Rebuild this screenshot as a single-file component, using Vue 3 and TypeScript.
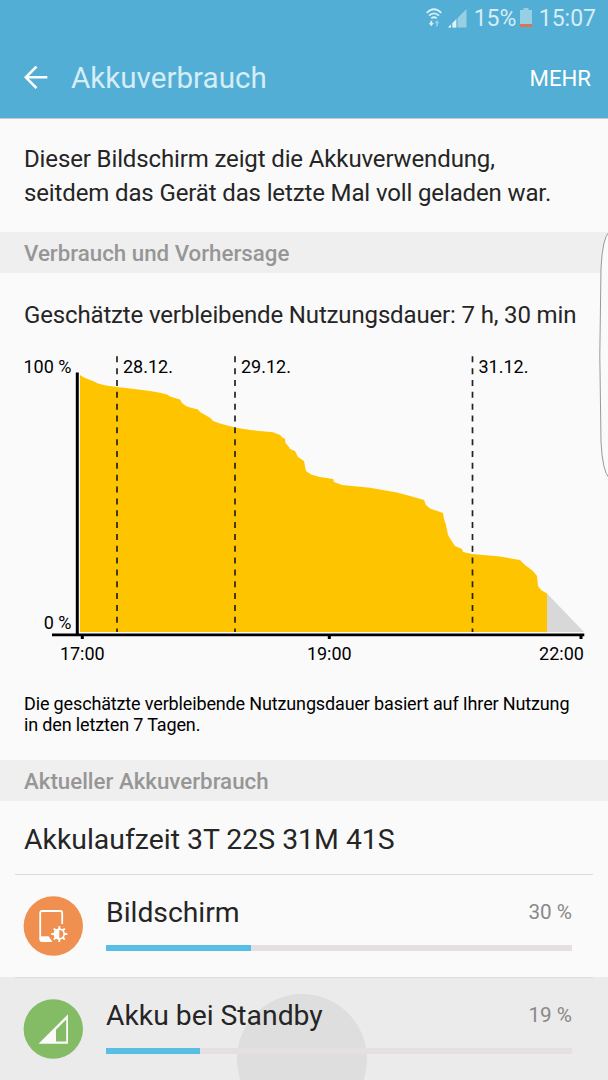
<script setup lang="ts">
interface Consumer {
  name: string
  percent: number
  fill: number
  icon: 'display' | 'standby'
  pressed: boolean
}

const consumers: Consumer[] = [
  { name: 'Bildschirm', percent: 30, fill: 31.1, icon: 'display', pressed: false },
  { name: 'Akku bei Standby', percent: 19, fill: 20.1, icon: 'standby', pressed: true },
]

const days = [
  { x: 117, label: '28.12.' },
  { x: 235, label: '29.12.' },
  { x: 472.5, label: '31.12.' },
]

const hours = [
  { tick: 82.3, x: 82.3, label: '17:00' },
  { tick: 329.3, x: 329.3, label: '19:00' },
  { tick: 581, x: 561.5, label: '22:00' },
]

const level: [number, number][] = [
  [80, 375], [85, 378], [93, 381], [98, 383.5], [106, 385.5], [117, 387], [130, 388.5],
  [150, 391], [160, 392.7], [167, 394.5], [170, 396.5], [180, 399.5], [182, 403], [186, 406],
  [190, 407.5], [198, 409.5], [200, 412], [207, 416], [211, 418.5], [213, 421], [220, 423.5],
  [235, 427.5], [250, 430], [273, 432.2], [280, 435], [283, 438], [285, 438.5], [285.5, 443],
  [289, 447], [290, 449], [295, 451], [298, 457], [304, 461], [306, 471], [311, 474.5],
  [320, 477], [333, 479], [334, 482], [342, 485], [370, 487.7], [397, 492.5], [410, 496],
  [424, 500], [426, 505], [430, 508.5], [443, 513], [444, 519], [446, 525], [448, 535],
  [451, 540], [455, 546], [462, 549], [463, 552], [472, 554], [500, 556.5], [520, 560],
  [525, 565], [533, 571], [537, 576], [538, 586], [541, 590], [547, 593.5],
]
const area = `80,632 ${level.map((p) => p.join(',')).join(' ')} 547,632`
</script>

<template>
  <div class="screen">
    <header class="top">
      <div class="status">
        <svg class="wifi" width="16" height="19" viewBox="0 0 16 19" fill="none" stroke="#d9eff7" stroke-width="1.800">
          <path d="M.7 4.800Q8-2.200 15.300 4.800M3 7.700Q8 3 13 7.700M5.300 10.400Q8 8 10.700 10.400" />
          <path d="M5.300 12.800V16" />
          <path d="M2.800 15h5L5.300 18.300z" fill="#d9eff7" stroke="none" />
          <g opacity=".5">
            <path d="M11 14.500V18.300" />
            <path d="M8.500 15.200h5L11 12z" fill="#d9eff7" stroke="none" />
          </g>
        </svg>
        <svg class="signal" width="19" height="19" viewBox="0 0 19 19">
          <path d="M0 18.500 18.500 0v18.500z" fill="#97cfe5" />
          <path d="M0 18.500 3.300 15.200v3.300zM4.500 18.500v-4.500L8.500 10v8.500z" fill="#e0f2f8" />
          <path d="M3.600 14v5M9 8.500v10.500" stroke="#52aed5" stroke-width="1" />
        </svg>
        <span class="charge">15%</span>
        <svg class="battery" width="12" height="19" viewBox="0 0 12 19">
          <path d="M0 2h3.500V0h5v2H12v17H0z" fill="#97cfe5" />
          <path d="M0 16h12v3H0z" fill="#d97552" />
        </svg>
        <span class="clock">15:07</span>
      </div>
      <div class="bar">
        <svg class="back" width="24" height="24" viewBox="0 0 24 24" fill="none" stroke="#fff" stroke-width="2.600">
          <path d="M12.500 .5 1.800 11.300 12.500 22.100M2 11.300H23.300" />
        </svg>
        <h1>Akkuverbrauch</h1>
        <button class="more">MEHR</button>
      </div>
    </header>

    <p class="intro">Dieser Bildschirm zeigt die Akkuverwendung,<br />seitdem das Gerät das letzte Mal voll geladen war.</p>

    <h2 class="section">Verbrauch und Vorhersage</h2>
    <p class="estimate">Geschätzte verbleibende Nutzungsdauer: 7 h, 30 min</p>

    <svg class="chart" width="608" height="330" viewBox="0 350 608 330">
      <polygon :points="area" fill="#ffc400" />
      <polygon points="547,593.5 584,632 547,632" fill="#d8d8d8" />
      <g stroke="#000">
        <path d="M77.300 372.500V634" stroke-width="3" />
        <path d="M52 634.900H584.300" stroke-width="2.800" />
        <path v-for="h in hours" :key="h.label" :d="`M${h.tick} 634v5`" stroke-width="3" />
        <path
          v-for="d in days" :key="d.label" :d="`M${d.x} 356.300V632`"
          stroke="#222" stroke-width="1.700" stroke-dasharray="6 5.840"
        />
      </g>
      <g class="labels">
        <text x="71.500" y="372.500" text-anchor="end">100 %</text>
        <text x="71.500" y="629" text-anchor="end">0 %</text>
        <text v-for="d in days" :key="d.label" :x="d.x + 6" y="372.500">{{ d.label }}</text>
        <text v-for="h in hours" :key="h.label" :x="h.x" y="659.700" text-anchor="middle">{{ h.label }}</text>
      </g>
    </svg>

    <p class="note">Die geschätzte verbleibende Nutzungsdauer basiert auf Ihrer Nutzung<br />in den letzten 7 Tagen.</p>

    <h2 class="section">Aktueller Akkuverbrauch</h2>
    <p class="runtime">Akkulaufzeit 3T 22S 31M 41S</p>

    <ul class="list">
      <li v-for="c in consumers" :key="c.name" :class="['item', { pressed: c.pressed }]">
        <span v-if="c.pressed" class="ripple"></span>
        <svg v-if="c.icon === 'display'" class="icon" width="60" height="60" viewBox="0 0 60 60">
          <circle cx="30.300" cy="30" r="29.700" fill="#ef8f50" />
          <path d="M39.200 28V17q0-2-2-2H19.200q-2 0-2 2v26q0 2 2 2H28" fill="none" stroke="#fff" stroke-width="1.800" />
          <path d="M17 40.300h8.500l4 5.400H19q-2 0-2-2z" fill="#fff" />
          <g transform="translate(36.300 38)">
            <path
              d="M0-8V8M-8 0H8M-5.500-5.500 5.500 5.500M-5.500 5.500 5.500-5.500"
              stroke="#fff" stroke-width="1.800"
            />
            <circle r="4.900" fill="#ef8f50" stroke="#fff" stroke-width="1.700" />
            <path d="M0-5.200A5.200 5.200 0 0 0 0 5.200z" fill="#fff" />
          </g>
        </svg>
        <svg v-else class="icon" width="60" height="60" viewBox="0 0 60 60">
          <circle cx="30.300" cy="30" r="29.700" fill="#84bb65" />
          <path fill-rule="evenodd" d="M15.500 44.800 45 15.300v29.500zM33 30.800v11.800h10.200v-22z" fill="#fafafa" />
        </svg>
        <div class="body">
          <div class="row">
            <span class="name">{{ c.name }}</span>
            <span class="percent">{{ c.percent }} %</span>
          </div>
          <div class="track"><div class="fill" :style="{ width: c.fill + '%' }"></div></div>
        </div>
      </li>
    </ul>

    <svg class="edge" width="10" height="250" viewBox="0 0 10 250" fill="#fafafa" stroke="#999" stroke-width="1">
      <path d="M11 2Q4.500 8 3 38Q.6 125 3 212Q4.500 241 11 248" />
    </svg>
  </div>
</template>

<style>
body {
  margin: 0;
  overflow: hidden;
  background: #fafafa;
}
</style>

<style scoped>
.screen {
  position: relative;
  width: 608px;
  height: 1080px;
  overflow: hidden;
  background: #fafafa;
  color: #252525;
  font-family: Roboto, "Liberation Sans", sans-serif;
}
h1, h2, p, ul {
  margin: 0;
  padding: 0;
  font-weight: 400;
  white-space: nowrap;
}
.top {
  height: 118px;
  background: #52aed5;
  border-bottom: 1px solid #c3cbd0;
}
.status {
  display: flex;
  height: 37px;
  padding-right: 12px;
  align-items: center;
  justify-content: flex-end;
  color: #d5edf6;
  font-size: 23px;
}
.wifi { margin: 0 6px 3px 0; }
.signal { margin: 0 6.500px 1px 0; }
.charge { margin-right: 4px; }
.battery { margin: 0 6.400px 2px 0; }
.bar {
  display: flex;
  height: 81px;
  padding: 0 17px 0 24px;
  align-items: center;
}
.back { margin-right: 23px; }
h1 {
  flex: 1;
  color: #d5edf6;
  font-size: 29.600px;
}
.more {
  padding: 0;
  border: 0;
  background: none;
  color: #fff;
  font-family: inherit;
  font-size: 22.200px;
}
.intro {
  height: 90px;
  padding: 23px 24px 0;
  font-size: 24px;
  letter-spacing: -.13px;
  line-height: 34px;
}
.section {
  height: 41px;
  padding-left: 24px;
  background: #efefef;
  color: #969696;
  font-size: 22.300px;
  font-weight: 500;
  line-height: 43px;
}
.estimate {
  height: 77px;
  padding-left: 24px;
  font-size: 24px;
  letter-spacing: -.15px;
  line-height: 85px;
}
.chart { display: block; }
.labels {
  fill: #000;
  font-size: 18px;
}
.note {
  height: 67px;
  padding: 13px 24px 0;
  color: #000;
  font-size: 18px;
  letter-spacing: -.145px;
  line-height: 21px;
}
.runtime {
  height: 73px;
  padding-left: 24px;
  font-size: 28.400px;
  line-height: 78px;
}
.list { list-style: none; }
.item {
  position: relative;
  display: flex;
  height: 103px;
  padding: 0 36px 0 23px;
  box-sizing: border-box;
  overflow: hidden;
}
.item::before {
  content: "";
  position: absolute;
  inset: 0 15px auto;
  height: 1px;
  background: #dcdcdc;
}
.pressed { background: #ebebeb; }
.ripple {
  position: absolute;
  left: 237px;
  top: 17px;
  width: 130px;
  height: 130px;
  border-radius: 50%;
  background: #dedede;
}
.icon {
  margin: 22px 23px 0 0;
  flex: none;
}
.body {
  position: relative;
  flex: 1;
}
.row {
  display: flex;
  height: 71px;
  align-items: center;
  justify-content: space-between;
}
.name {
  padding-top: 5px;
  font-size: 28.300px;
}
.percent {
  padding-top: 5px;
  color: #888;
  font-size: 20.700px;
}
.track {
  height: 5.500px;
  background: #e5e0df;
}
.fill {
  height: 100%;
  background: #58bee3;
}
.edge {
  position: absolute;
  top: 230px;
  right: 0;
}
</style>
